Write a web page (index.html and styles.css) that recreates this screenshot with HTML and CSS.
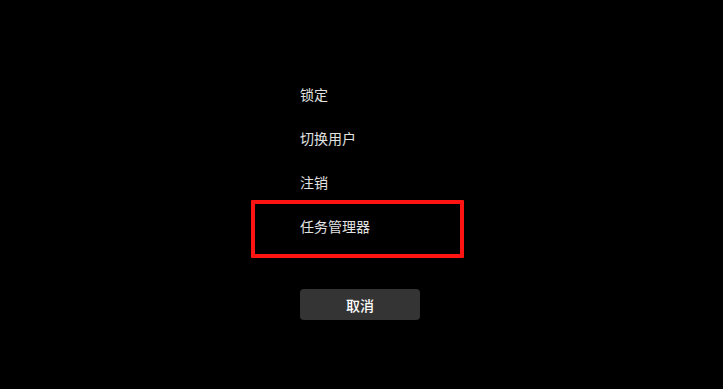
FILE: index.html
```html
<!DOCTYPE html>
<html lang="zh-CN">
<head>
    <meta charset="UTF-8">
    <meta name="viewport" content="width=device-width, initial-scale=1.0">
    <title>安全选项</title>
    <link rel="stylesheet" href="styles.css">
</head>
<body>
    <div class="screen">
        <ul class="options">
            <li class="option">锁定</li>
            <li class="option">切换用户</li>
            <li class="option">注销</li>
            <li class="option">任务管理器</li>
        </ul>
        <button class="cancel" type="button">取消</button>
        <div class="highlight"></div>
    </div>
</body>
</html>
```

FILE: styles.css
```css
html, body {
    margin: 0;
    background-color: #000;
}
.screen {
    position: relative;
    width: 723px;
    height: 389px;
    box-sizing: border-box;
    padding: 72px 0 0 300px;
    font-family: "Noto Sans CJK SC", "Noto Sans", sans-serif;
    color: #e2e2e2;
}
.options {
    list-style: none;
    margin: 0;
    padding: 0;
}
.option {
    height: 44px;
    line-height: 44px;
    font-size: 14px;
}
.cancel {
    display: block;
    margin-top: 41px;
    width: 120px;
    height: 31px;
    border: none;
    border-radius: 4px;
    background-color: #343434;
    color: #fff;
    font-family: inherit;
    font-size: 14px;
    font-weight: 500;
    padding: 0;
}
.highlight {
    position: absolute;
    left: 251px;
    top: 200px;
    width: 213px;
    height: 58px;
    box-sizing: border-box;
    border: 4px solid #ff1414;
    border-radius: 1px;
}
```
